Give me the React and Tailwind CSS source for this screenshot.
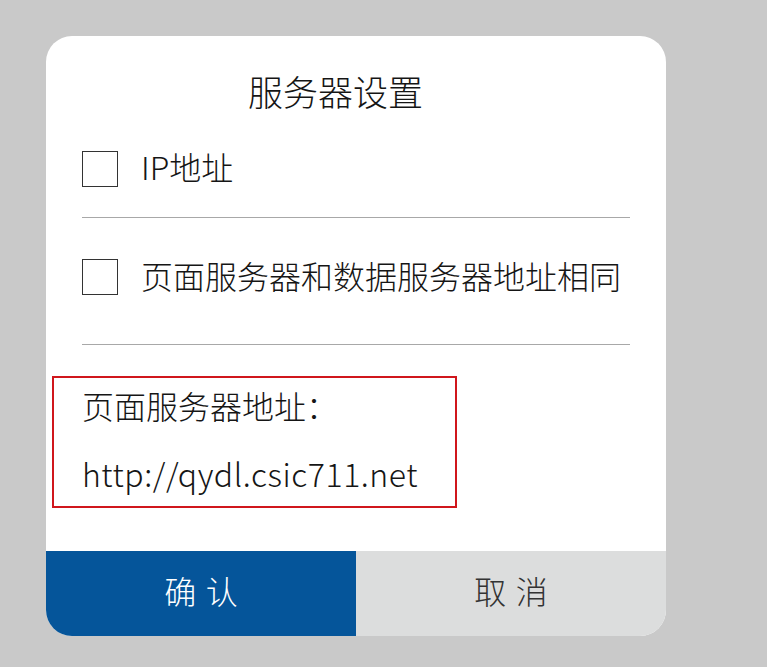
export default function App() {
  const font = { fontFamily: '"Noto Sans CJK SC", "Noto Sans", sans-serif' };
  return (
    <div className="w-[767px] h-[667px] bg-[#c9c9c9] pt-[36px] pl-[46px]" style={font}>
      <div className="w-[620px] h-[600px] bg-white rounded-[26px] overflow-hidden flex flex-col">
        <div className="px-[36px] flex flex-col">
          <div className="h-[114px] flex items-center pl-[166px] pb-[6px] text-[35px] font-light text-[#151515] leading-none">
            服务器设置
          </div>
          <div className="h-[38px] flex items-center">
            <div className="w-[36px] h-[36px] border border-[#333] shrink-0" />
            <div className="ml-[23px] mb-[6px] text-[32px] font-light text-[#151515] leading-none">IP地址</div>
          </div>
          <div className="mt-[29px] border-t border-[#a8a8a8]" />
          <div className="mt-[40px] h-[38px] flex items-center">
            <div className="w-[36px] h-[36px] border border-[#333] shrink-0" />
            <div className="ml-[23px] mb-[4px] text-[32px] font-light text-[#151515] leading-none whitespace-nowrap">页面服务器和数据服务器地址相同</div>
          </div>
          <div className="mt-[48px] border-t border-[#a8a8a8]" />
          <div className="mt-[31px] ml-[-30px] w-[405px] h-[132px] border-2 border-[#d0161c] pl-[28px] pt-[10px] flex flex-col gap-[27px]">
            <div className="h-[40px] flex items-center pb-[6px] text-[32px] font-light text-[#151515] leading-none">页面服务器地址：</div>
            <div className="h-[40px] flex items-center pb-[5px] text-[32px] font-light text-[#151515] leading-none tracking-[0.55px]">http://qydl.csic711.net</div>
          </div>
        </div>
        <div className="mt-auto h-[85px] flex">
          <div className="w-[310px] bg-[#05559a] flex items-center justify-center pb-[7px] text-white text-[32px] font-light tracking-[0.3em] pl-[0.3em]">确认</div>
          <div className="w-[310px] bg-[#dcdddd] flex items-center justify-center pb-[7px] text-[#333] text-[32px] font-light tracking-[0.3em] pl-[0.3em]">取消</div>
        </div>
      </div>
    </div>
  );
}
